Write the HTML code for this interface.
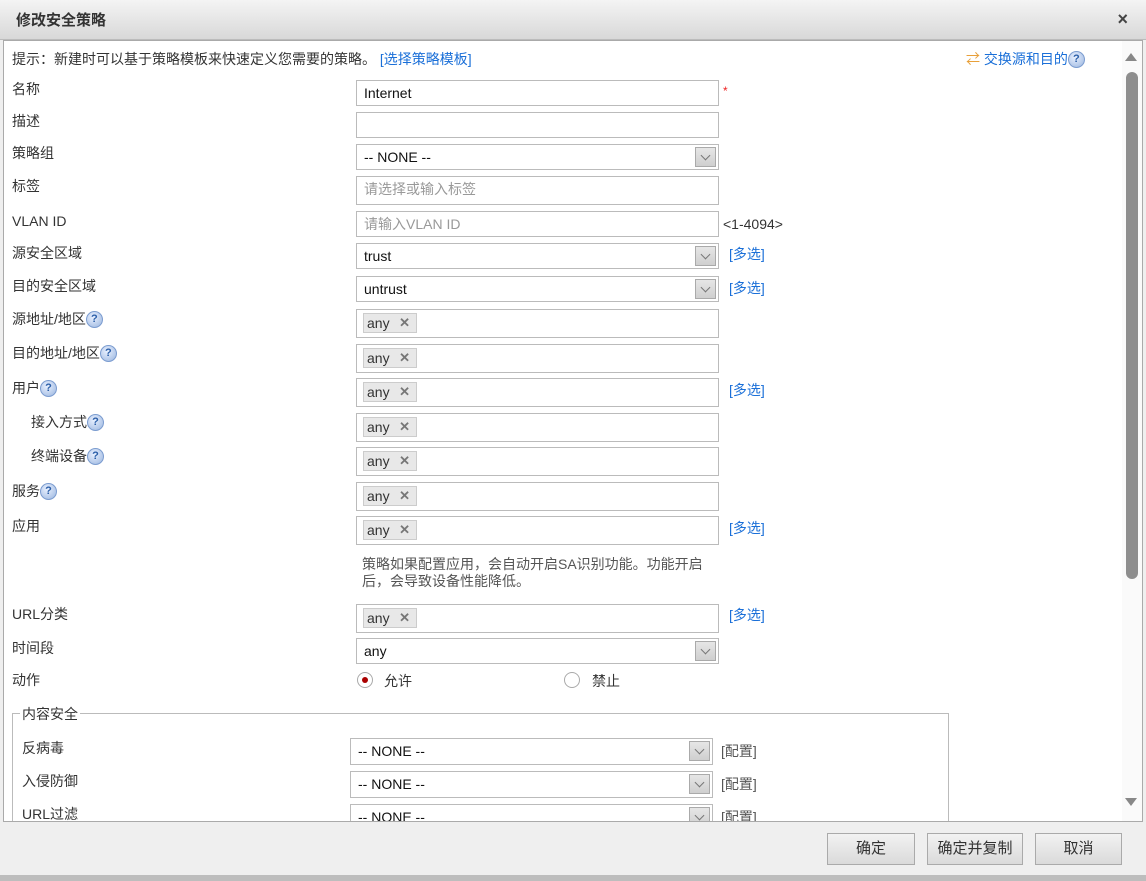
<!DOCTYPE html>
<html><head><meta charset="utf-8"><style>
*{box-sizing:border-box;margin:0;padding:0}
body{width:1146px;height:881px;overflow:hidden;background:#efefef;font-family:"Liberation Sans","Noto Sans CJK SC",sans-serif;font-size:14px;color:#333;position:relative}
.abs{position:absolute}
.title{left:0;top:0;width:1146px;height:40px;background:linear-gradient(#f4f4f4,#d8d8d8);border-bottom:1px solid #bbb}
.title span{position:absolute;left:16px;top:9px;font-size:15px;font-weight:bold;color:#333}
.close{right:18px;top:9px;font-size:18px;font-weight:bold;color:#444}
.body{left:3px;top:40px;width:1140px;height:782px;background:#fff;border:1px solid #aaa;overflow:hidden}
.lbl{position:absolute;left:12px;white-space:nowrap;line-height:18px}
.f{position:absolute;left:356px;width:363px;border:1px solid #bbb;background:#fff;padding-left:7px;line-height:24px;height:26px;color:#111}
.ph{color:#999}
.sel .dd{position:absolute;right:2px;top:2px;width:21px;height:20px;background:linear-gradient(#e6e6e6,#cfcfcf);border:1px solid #aaa}
.sel .dd:after{content:"";position:absolute;left:6px;top:4px;width:6px;height:6px;border-right:1.5px solid #777;border-bottom:1.5px solid #777;transform:rotate(45deg)}
.tag{position:absolute;left:6px;top:3px;width:54px;height:20px;background:#e8e8e8;border:1px solid #ccc;line-height:18px;padding-left:3px;color:#333}
.tag b{position:absolute;right:6px;top:0;color:#777;font-size:13px}
.link{position:absolute;color:#1a6fd8;white-space:nowrap;line-height:18px}
.q{display:inline-block;width:17px;height:17px;border-radius:50%;background:radial-gradient(circle at 40% 35%,#e8f0ff,#9ab5de);border:1px solid #7b9cd0;color:#2a5ea8;font-size:11px;font-weight:bold;text-align:center;line-height:15px;vertical-align:top;margin-top:1px}
.btn{position:absolute;top:833px;height:32px;background:linear-gradient(#f2f2f2,#dadada);border:1px solid #aaa;text-align:center;line-height:30px;font-size:15px;color:#333}
</style></head><body>
<div class="abs title"><span>修改安全策略</span></div>
<div class="abs close">×</div>
<div class="abs body">
<div style="position:relative;left:-4px;top:-41px">
<div class="lbl" style="top:50px">提示：新建时可以基于策略模板来快速定义您需要的策略。 <span style="color:#1a6fd8">[选择策略模板]</span></div>
<div class="link" style="left:966px;top:50px"><span style="color:#e8a03a">⇄</span> 交换源和目的<span class="q">?</span></div>

<div class="lbl" style="top:80px">名称</div><div class="f" style="top:80px">Internet</div><span class="abs" style="left:723px;top:84px;color:#e22;font-size:12px">*</span>
<div class="lbl" style="top:112px">描述</div><div class="f" style="top:112px"></div>
<div class="lbl" style="top:144px">策略组</div><div class="f sel" style="top:144px">-- NONE --<div class="dd"></div></div>
<div class="lbl" style="top:177px">标签</div><div class="f ph" style="top:176px;height:29px">请选择或输入标签</div>
<div class="lbl" style="top:212px">VLAN ID</div><div class="f ph" style="top:211px">请输入VLAN ID</div><span class="abs" style="left:723px;top:216px">&lt;1-4094&gt;</span>
<div class="lbl" style="top:244px">源安全区域</div><div class="f sel" style="top:243px">trust<div class="dd"></div></div><div class="link" style="left:729px;top:245px">[多选]</div>
<div class="lbl" style="top:277px">目的安全区域</div><div class="f sel" style="top:276px">untrust<div class="dd"></div></div><div class="link" style="left:729px;top:279px">[多选]</div>
<div class="lbl" style="top:310px">源地址/地区<span class="q">?</span></div><div class="f" style="top:309px;height:29px"><div class="tag">any<b>✕</b></div></div>
<div class="lbl" style="top:344px">目的地址/地区<span class="q">?</span></div><div class="f" style="top:344px;height:29px"><div class="tag">any<b>✕</b></div></div>
<div class="lbl" style="top:379px">用户<span class="q">?</span></div><div class="f" style="top:378px;height:29px"><div class="tag">any<b>✕</b></div></div><div class="link" style="left:729px;top:381px">[多选]</div>
<div class="lbl" style="top:413px;left:31px">接入方式<span class="q">?</span></div><div class="f" style="top:413px;height:29px"><div class="tag">any<b>✕</b></div></div>
<div class="lbl" style="top:447px;left:31px">终端设备<span class="q">?</span></div><div class="f" style="top:447px;height:29px"><div class="tag">any<b>✕</b></div></div>
<div class="lbl" style="top:482px">服务<span class="q">?</span></div><div class="f" style="top:482px;height:29px"><div class="tag">any<b>✕</b></div></div>
<div class="lbl" style="top:517px">应用</div><div class="f" style="top:516px;height:29px"><div class="tag">any<b>✕</b></div></div><div class="link" style="left:729px;top:519px">[多选]</div>
<div class="abs" style="left:362px;top:556px;width:380px;font-size:14px;line-height:17px;color:#555;white-space:nowrap">策略如果配置应用，会自动开启SA识别功能。功能开启<br>后，会导致设备性能降低。</div>
<div class="lbl" style="top:605px">URL分类</div><div class="f" style="top:604px;height:29px"><div class="tag">any<b>✕</b></div></div><div class="link" style="left:729px;top:606px">[多选]</div>
<div class="lbl" style="top:639px">时间段</div><div class="f sel" style="top:638px">any<div class="dd"></div></div>
<div class="lbl" style="top:671px">动作</div>
<span class="abs" style="left:357px;top:672px;width:16px;height:16px;border-radius:50%;border:1px solid #aaa;background:#fff"><span class="abs" style="left:4px;top:4px;width:6px;height:6px;border-radius:50%;background:#a00"></span></span>
<span class="abs" style="left:384px;top:671px">允许</span>
<span class="abs" style="left:564px;top:672px;width:16px;height:16px;border-radius:50%;border:1px solid #aaa;background:#fff"></span>
<span class="abs" style="left:592px;top:671px">禁止</span>
<div class="abs" style="left:12px;top:713px;width:937px;height:200px;border:1px solid #bbb"></div>
<span class="abs" style="left:20px;top:704px;background:#fff;padding:0 2px">内容安全</span>
<div class="lbl" style="top:739px;left:22px">反病毒</div><div class="f sel" style="left:350px;width:363px;top:738px;height:27px">-- NONE --<div class="dd"></div></div><span class="abs" style="left:721px;top:741px;color:#555">[配置]</span>
<div class="lbl" style="top:772px;left:22px">入侵防御</div><div class="f sel" style="left:350px;width:363px;top:771px;height:27px">-- NONE --<div class="dd"></div></div><span class="abs" style="left:721px;top:774px;color:#555">[配置]</span>
<div class="lbl" style="top:805px;left:22px">URL过滤</div><div class="f sel" style="left:350px;width:363px;top:804px;height:27px">-- NONE --<div class="dd"></div></div><span class="abs" style="left:721px;top:807px;color:#555">[配置]</span>
<div class="abs" style="left:1122px;top:41px;width:20px;height:781px;background:#fafafa"></div>
<div class="abs" style="left:1125px;top:53px;width:0;height:0;border-left:6px solid transparent;border-right:6px solid transparent;border-bottom:8px solid #888"></div>
<div class="abs" style="left:1126px;top:72px;width:12px;height:507px;border-radius:6px;background:#8e8e8e"></div>
<div class="abs" style="left:1125px;top:798px;width:0;height:0;border-left:6px solid transparent;border-right:6px solid transparent;border-top:8px solid #888"></div>
</div></div>
<div class="btn" style="left:827px;width:88px">确定</div>
<div class="btn" style="left:927px;width:96px">确定并复制</div>
<div class="btn" style="left:1035px;width:87px">取消</div>
<div class="abs" style="left:0;top:875px;width:1146px;height:6px;background:#bdbdbd"></div>
</body></html>
